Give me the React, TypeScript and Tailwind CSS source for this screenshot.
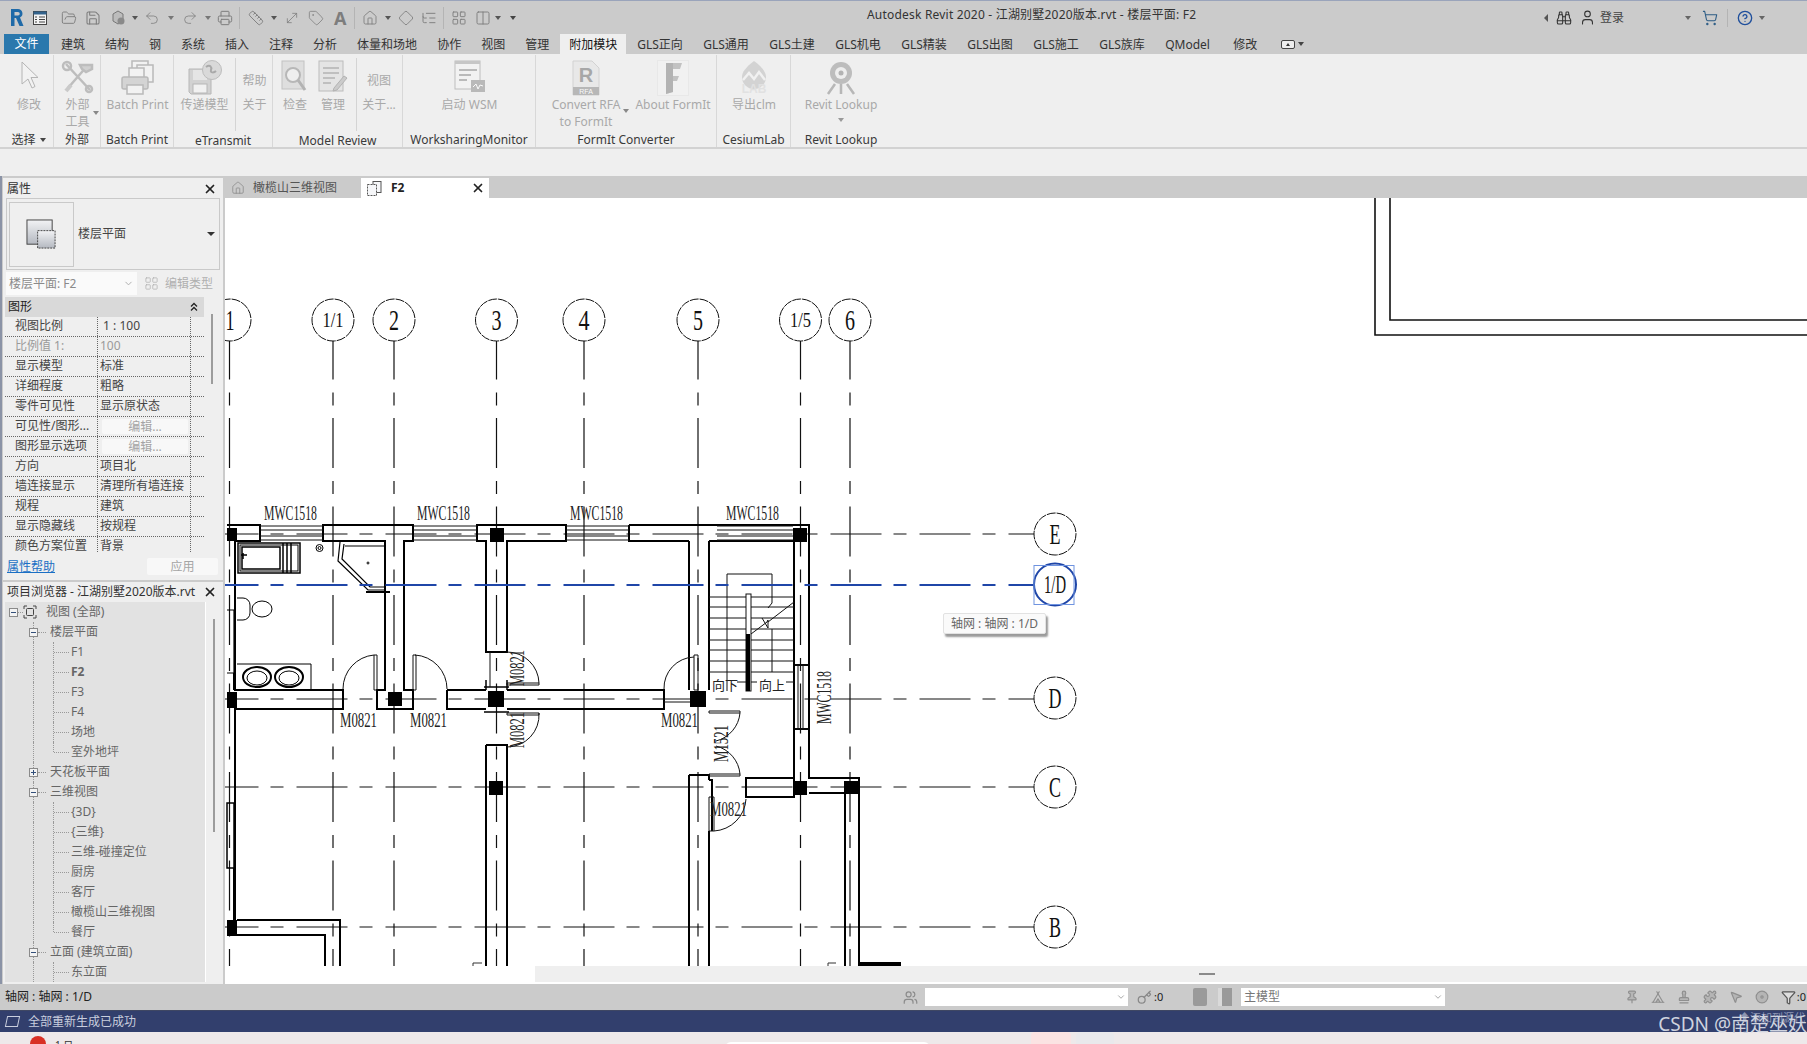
import {
  X, FolderOpen, Save, Undo2, Redo2, Printer, Ruler, MoveDiagonal, Tag, Home, Diamond, ListTree, LayoutGrid, Columns2,
  Binoculars, User, ShoppingCart, CircleHelp, ChevronDown, Pin, Tent, Stamp, Puzzle, MousePointer2, Disc, Filter, Users, Key,
} from "lucide-react";
import { ReactNode } from "react";

const Tri = ({ className = "" }: { className?: string }) => (
  <span className={`inline-block w-0 h-0 border-l-[3px] border-r-[3px] border-t-[4px] border-l-transparent border-r-transparent border-t-[#444] ${className}`} />
);

function Qat({ w, children }: { w: number; children?: ReactNode }) {
  return <div className="flex items-center justify-center shrink-0" style={{ width: w }}>{children}</div>;
}

function TitleBar() {
  const ic = "w-4 h-4 text-[#7d7d7d]";
  return (
    <div className="h-[34px] border-t border-[#9aa4bb] flex items-center shrink-0">
      <div className="w-[867px] flex items-center pl-[10px] shrink-0">
        <Qat w={14}>
          <svg width="14" height="19" viewBox="0 0 14 19"><path d="M1 1h7a4.5 4.5 0 0 1 2 8.5L13.500 18H9.500L6 10H4.500v8H1z" fill="#1f6aa8" /><path d="M4.500 4v3.500H8a1.700 1.700 0 0 0 0-3.500z" fill="#cbcbcb" /></svg>
        </Qat>
        <div className="w-[9px]" />
        <Qat w={14}>
          <svg width="14" height="14" viewBox="0 0 14 14"><rect x=".5" y=".5" width="13" height="13" fill="#f4f4f4" stroke="#444" /><rect x=".5" y=".5" width="13" height="3" fill="#33638c" /><path d="M6 6h6M6 8.500h6M6 11h6M2 6h2M2 8.500h2M2 11h2" stroke="#444" /></svg>
        </Qat>
        <div className="w-[14px]" />
        <FolderOpen className={ic} strokeWidth={1.4} />
        <div className="w-[8px]" />
        <Save className={ic} strokeWidth={1.6} />
        <div className="w-[9px]" />
        <Qat w={16}><svg width="16" height="16" viewBox="0 0 16 16"><path d="M3 4l5-3 5 3v7l-5 3-5-3z" fill="#bcbcbc" stroke="#777" /><circle cx="11" cy="11" r="3.500" fill="#8a8a8a" /></svg></Qat>
        <Qat w={18}><Tri className="border-t-[#555]" /></Qat>
        <Undo2 className={ic} strokeWidth={1.2} />
        <Qat w={22}><Tri className="border-t-[#777]" /></Qat>
        <Redo2 className={ic} strokeWidth={1.2} />
        <Qat w={19}><Tri className="border-t-[#777]" /></Qat>
        <Printer className={ic} strokeWidth={1.5} />
        <div className="w-[6px]" /><div className="w-px h-[22px] bg-[#b4b4b4]" /><div className="w-[8px]" />
        <Ruler className={ic} strokeWidth={1.4} />
        <Qat w={20}><Tri className="border-t-[#555]" /></Qat>
        <MoveDiagonal className={ic} strokeWidth={1.2} />
        <div className="w-[8px]" />
        <Tag className={ic} strokeWidth={1.2} />
        <div className="w-[10px]" />
        <span className="text-[18px] leading-none font-bold text-[#7d7d7d] w-[12px]">A</span>
        <div className="w-[8px]" /><div className="w-px h-[22px] bg-[#b4b4b4]" /><div className="w-[7px]" />
        <Home className={ic} strokeWidth={1.3} />
        <Qat w={20}><Tri className="border-t-[#555]" /></Qat>
        <Diamond className={ic} strokeWidth={1.3} />
        <div className="w-[7px]" />
        <ListTree className={ic} strokeWidth={1.4} />
        <div className="w-[6px]" /><div className="w-px h-[22px] bg-[#b4b4b4]" /><div className="w-[7px]" />
        <LayoutGrid className={ic} strokeWidth={1.4} />
        <div className="w-[8px]" />
        <Columns2 className={ic} strokeWidth={1.4} />
        <Qat w={14}><Tri className="border-t-[#555]" /></Qat>
        <Qat w={16}><Tri className="border-t-[#333]" /></Qat>
      </div>
      <div className="text-[12px] text-[#333] whitespace-nowrap tracking-[0.2px] pb-[6px]">Autodesk Revit 2020 - 江湖别墅2020版本.rvt - 楼层平面: F2</div>
      <div className="ml-auto flex items-center pr-[42px] gap-0">
        <span className="w-0 h-0 border-y-[4px] border-r-[4px] border-y-transparent border-r-[#555] mr-[8px]" />
        <Binoculars className="w-4 h-4 text-[#333]" strokeWidth={1.6} />
        <User className="w-[17px] h-[17px] text-[#333] ml-[7px]" strokeWidth={1.5} />
        <span className="text-[12px] text-[#444] ml-[4px] w-[85px]">登录</span>
        <Tri className="border-t-[#666]" />
        <ShoppingCart className="w-4 h-4 text-[#2c5c85] ml-[11px]" strokeWidth={1.6} />
        <div className="w-px h-[18px] bg-[#b4b4b4] ml-[9px] mr-[9px]" />
        <CircleHelp className="w-4 h-4 text-[#1f4f9c]" strokeWidth={2} />
        <Tri className="ml-[6px] border-t-[#666]" />
      </div>
    </div>
  );
}

const tabs = ["建筑", "结构", "钢", "系统", "插入", "注释", "分析", "体量和场地", "协作", "视图", "管理"];
const tabs2 = ["GLS正向", "GLS通用", "GLS土建", "GLS机电", "GLS精装", "GLS出图", "GLS施工", "GLS族库"];

function TabRow() {
  return (
    <div className="h-[20px] flex items-center text-[12px] text-[#333] shrink-0 pl-[4px]">
      <div className="w-[45px] h-full bg-[#2a78ad] text-white flex items-center justify-center">文件</div>
      <div className="flex gap-[20px] ml-[12px] pt-px">
        {tabs.map((t) => <span key={t}>{t}</span>)}
      </div>
      <div className="w-[66px] h-full bg-[#efefef] flex items-center justify-center ml-[11px] text-[#111] pt-px">附加模块</div>
      <div className="flex gap-[20px] ml-[11px] whitespace-nowrap pt-px">
        {tabs2.map((t) => <span key={t} className="w-[46px]">{t}</span>)}
        <span className="w-[48px]">QModel</span>
        <span>修改</span>
      </div>
      <div className="ml-[24px] flex items-center gap-[3px]">
        <span className="w-[14px] h-[9px] border border-[#444] rounded-[2px] bg-[#eee] flex items-center justify-center"><span className="w-0 h-0 border-x-[2px] border-b-[3px] border-x-transparent border-b-[#333]" /></span>
        <Tri />
      </div>
    </div>
  );
}

// gray ribbon icons, all disabled look
const RIc = {
  arrow: <svg width="22" height="34" viewBox="0 0 22 34"><path d="M4 2v22l6-5 4 9 3-1.500-4-9h7z" fill="#f4f4f4" stroke="#9c9c9c" /></svg>,
  tools: <svg width="34" height="34" viewBox="0 0 34 34" fill="none" stroke="#a9a9a9" strokeWidth="2.500"><path d="M5 4l24 26M27 5L7 28" /><path d="M19 5h12v4l-6 3-4-3z" fill="#c4c4c4" /><circle cx="6" cy="6" r="4" /><circle cx="28" cy="29" r="3" /><path d="M5 31l5-6" strokeWidth="4" stroke="#bbb" /></svg>,
  print: <svg width="34" height="36" viewBox="0 0 34 36" fill="#f4f4f4" stroke="#a3a3a3" strokeWidth="1.500"><rect x="11" y="1" width="16" height="17" /><rect x="16" y="5" width="16" height="17" /><rect x="8" y="8" width="15" height="12" /><rect x="1" y="17" width="26" height="12" rx="2" fill="#c9c9c9" /><rect x="6" y="25" width="16" height="9" /></svg>,
  floppy: <svg width="34" height="36" viewBox="0 0 34 36"><path d="M1 9h22v25H3l-2-2z" fill="#c6c6c6" stroke="#a0a0a0" /><rect x="5" y="24" width="14" height="9" fill="#f2f2f2" stroke="#a0a0a0" /><rect x="5" y="10" width="14" height="10" fill="#e2e2e2" /><circle cx="24" cy="10" r="9.500" fill="#d0d0d0" stroke="#a8a8a8" /><path d="M18 7c4-3 6 0 5 3s3 3 5 1" fill="none" stroke="#8c8c8c" strokeWidth="2" /></svg>,
  check: <svg width="28" height="34" viewBox="0 0 28 34"><rect x="1" y="1" width="22" height="28" fill="#d8d8d8" stroke="#b0b0b0" /><circle cx="12" cy="15" r="7" fill="#f0f0f0" stroke="#a0a0a0" strokeWidth="2" /><path d="M17 20l7 10" stroke="#9a9a9a" strokeWidth="3" /></svg>,
  manage: <svg width="30" height="34" viewBox="0 0 30 34"><rect x="1" y="1" width="24" height="30" fill="#e0e0e0" stroke="#a8a8a8" /><path d="M5 8h16M5 13h16M5 18h12M5 23h8" stroke="#9a9a9a" strokeWidth="1.500" /><path d="M16 28l10-12 3 2-10 12-4 1z" fill="#bdbdbd" stroke="#999" /></svg>,
  wsm: <svg width="32" height="34" viewBox="0 0 32 34"><rect x="1" y="1" width="25" height="28" fill="#f4f4f4" stroke="#aaa" /><rect x="1" y="1" width="25" height="3" fill="#b5b5b5" /><path d="M5 10h18M5 15h12M5 20h8" stroke="#a5a5a5" strokeWidth="2" /><rect x="17" y="20" width="14" height="12" fill="#a3a3a3" /><path d="M19 27l3-3 2 5 2-4 3 1" stroke="#fff" fill="none" /></svg>,
  rfa: <svg width="28" height="36" viewBox="0 0 28 36"><path d="M1 1h19l7 7v27H1z" fill="#e6e6e6" stroke="#c6c6c6" /><rect x="1" y="27" width="26" height="8" fill="#a0a0a0" /><text x="14" y="34" fontSize="7" textAnchor="middle" fill="#fff" fontFamily="Liberation Sans">RFA</text><text x="14" y="22" fontSize="20" fontWeight="700" textAnchor="middle" fill="#8a8a8a" fontFamily="Liberation Sans">R</text></svg>,
  formit: <svg width="32" height="36" viewBox="0 0 32 36"><rect x=".5" y=".5" width="31" height="35" fill="#f3f3f3" stroke="#e6e6e6" /><path d="M9 3h16l-2 6H16v7h6l-2 5h-4v11l-7 2z" fill="#b0b0b0" /><path d="M9 3v31l7-2V3z" fill="#8e8e8e" opacity=".6" /></svg>,
  lab: <svg width="30" height="36" viewBox="0 0 30 36"><path d="M15 1c8 6 12 11 12 16a12 12 0 0 1-24 0C3 12 7 7 15 1z" fill="#c8c8c8" /><path d="M4 20l6-7 5 6 5-7 6 8" fill="none" stroke="#f2f2f2" strokeWidth="2.500" /><text x="15" y="33" fontSize="12" fontWeight="700" textAnchor="middle" fill="#dcdcdc" fontFamily="Liberation Sans">LAB</text></svg>,
  lookup: <svg width="30" height="36" viewBox="0 0 30 36" fill="none"><path d="M9 24L2 34M21 24l7 10M15 24v10" stroke="#a0a0a0" strokeWidth="2.500" /><circle cx="15" cy="13" r="11" fill="#a8a8a8" /><circle cx="15" cy="13" r="6" fill="#eee" /><circle cx="15" cy="13" r="2.500" fill="#9a9a9a" /></svg>,
};

function RBtn({ w, icon, label, label2 }: { w: number; icon?: ReactNode; label: string; label2?: string }) {
  return (
    <div className="flex flex-col items-center shrink-0" style={{ width: w }}>
      <div className="h-[41px] pt-[5px] flex items-start justify-center opacity-70">{icon}</div>
      <div className="text-[12px] leading-[17px] text-[#a9a9a9] text-center whitespace-nowrap">{label}</div>
      {label2 && <div className="text-[12px] leading-[17px] text-[#a9a9a9] text-center whitespace-nowrap">{label2}</div>}
    </div>
  );
}

function MiniBtn({ w, a, b }: { w: number; a: string; b: string }) {
  return (
    <div className="flex flex-col items-center text-[12px] text-[#a9a9a9] pt-[17px] shrink-0" style={{ width: w }}>
      <span className="leading-[17px]">{a}</span>
      <span className="leading-[17px] mt-[7px]">{b}</span>
    </div>
  );
}

function Panel({ w, title, children, last, tri }: { w: number; title: string; children: ReactNode; last?: boolean; tri?: boolean }) {
  return (
    <div className={`h-full flex flex-col shrink-0 ${last ? "" : "border-r border-[#d8d8d8]"}`} style={{ width: w }}>
      <div className="h-[77px] flex">{children}</div>
      <div className="h-[17px] pt-[2px] flex items-center justify-center gap-[4px] text-[12px] text-[#3a3a3a] whitespace-nowrap">
        {title}{tri && <Tri />}
      </div>
    </div>
  );
}

const VSep = () => <div className="w-px h-[73px] mt-[3px] bg-[#d4d4d4] shrink-0" />;

function Ribbon() {
  return (
    <div className="h-[95px] bg-[#efefef] border-b-2 border-[#d2d2d2] flex pl-[4px] shrink-0 pt-px">
      <Panel w={50} title="选择" tri><RBtn w={50} icon={RIc.arrow} label="修改" /></Panel>
      <Panel w={47} title="外部">
        <div className="relative">
          <RBtn w={47} icon={RIc.tools} label="外部" label2="工具" />
          <Tri className="absolute right-[2px] top-[56px] border-t-[#888]" />
        </div>
      </Panel>
      <Panel w={73} title="Batch Print"><RBtn w={73} icon={RIc.print} label="Batch Print" /></Panel>
      <Panel w={99} title="eTransmit">
        <RBtn w={61} icon={RIc.floppy} label="传递模型" /><VSep /><MiniBtn w={37} a="帮助" b="关于" />
      </Panel>
      <Panel w={130} title="Model Review">
        <div className="w-[3px]" />
        <RBtn w={38} icon={RIc.check} label="检查" /><RBtn w={38} icon={RIc.manage} label="管理" />
        <div className="w-[4px]" /><VSep /><MiniBtn w={44} a="视图" b="关于..." />
      </Panel>
      <Panel w={133} title="WorksharingMonitor"><RBtn w={133} icon={RIc.wsm} label="启动 WSM" /></Panel>
      <Panel w={181} title="FormIt Converter">
        <div className="relative">
          <RBtn w={100} icon={RIc.rfa} label="Convert RFA" label2="to FormIt" />
          <Tri className="absolute right-[7px] top-[54px] border-t-[#888]" />
        </div>
        <RBtn w={74} icon={RIc.formit} label="About FormIt" />
      </Panel>
      <Panel w={74} title="CesiumLab"><RBtn w={74} icon={RIc.lab} label="导出clm" /></Panel>
      <Panel w={100} title="Revit Lookup" last>
        <div className="flex flex-col items-center w-[100px]">
          <RBtn w={100} icon={RIc.lookup} label="Revit Lookup" />
          <Tri className="mt-[5px] border-t-[#999]" />
        </div>
      </Panel>
    </div>
  );
}

const props: [string, string, number?][] = [
  ["视图比例", "\u00a01 : 100"],
  ["比例值 1:", "100", 1],
  ["显示模型", "标准"],
  ["详细程度", "粗略"],
  ["零件可见性", "显示原状态"],
  ["可见性/图形...", "编辑...", 2],
  ["图形显示选项", "编辑...", 2],
  ["方向", "项目北"],
  ["墙连接显示", "清理所有墙连接"],
  ["规程", "建筑"],
  ["显示隐藏线", "按规程"],
  ["颜色方案位置", "背景"],
];

function PropertiesPanel() {
  return (
    <div className="h-[402px] bg-[#efefef] flex flex-col shrink-0">
      <div className="h-[20px] flex items-center justify-between pl-[4px] pr-[6px] pt-px text-[12px] text-[#333] shrink-0">
        <span>属性</span>
        <X className="w-[14px] h-[14px] text-[#222]" strokeWidth={3} />
      </div>
      <div className="h-[72px] mx-[3px] border border-[#c9c9c9] flex items-center pl-[2px] shrink-0">
        <div className="w-[65px] h-[65px] border border-[#c9c9c9] flex items-center justify-center">
          <svg width="31" height="31" viewBox="0 0 32 32">
            <defs><linearGradient id="pg" x1="0" y1="0" x2="0" y2="1"><stop offset="0" stopColor="#f2f3f5" /><stop offset="1" stopColor="#b4b8c0" /></linearGradient></defs>
            <rect x="1" y="1" width="26" height="25" fill="url(#pg)" stroke="#444" />
            <rect x="12" y="12" width="18" height="18" fill="url(#pg)" stroke="#444" strokeDasharray="2 1" />
          </svg>
        </div>
        <span className="text-[12px] text-[#444] ml-[4px]">楼层平面</span>
        <span className="ml-auto mr-[4px] w-0 h-0 border-x-[4px] border-t-[4px] border-x-transparent border-t-[#333]" />
      </div>
      <div className="h-[23px] mt-[2px] mx-[3px] flex items-center shrink-0">
        <div className="w-[131px] h-full bg-[#fafafa] flex items-center justify-between px-[3px] text-[12px] text-[#8a8a8a]">
          <span>楼层平面: F2</span><ChevronDown className="w-[11px] h-[11px] text-[#aaa]" />
        </div>
        <div className="ml-[7px] flex items-center text-[12px] text-[#b0b0b0] gap-[6px]">
          <LayoutGrid className="w-[15px] h-[15px]" strokeWidth={1.2} /><span>编辑类型</span>
        </div>
      </div>
      <div className="flex flex-1 min-h-0 mt-[2px]">
        <div className="ml-[2px] w-[199px] overflow-hidden">
          <div className="h-[20px] bg-[#d9d9d9] flex items-center justify-between pl-[3px] pr-[6px] text-[12px] text-[#222]">
            <span>图形</span>
            <svg width="8" height="10" viewBox="0 0 8 10" fill="none" stroke="#222" strokeWidth="1.300"><path d="M1 4.500l3-3 3 3M1 8.500l3-3 3 3" /></svg>
          </div>
          <div className="h-[236px] overflow-hidden">
            {props.map(([k, v, kind]) => (
              <div key={k} className="h-[20px] grid grid-cols-[93px_93px_13px] border-b border-dotted border-[#666] text-[12px] leading-[15px]">
                <span className={`pl-[10px] pt-px border-r border-dotted border-[#666] whitespace-nowrap ${kind === 1 ? "text-[#9a9a9a]" : "text-[#444]"}`}>{k}</span>
                <span className={`pl-[2px] pt-px border-r border-dotted border-[#666] whitespace-nowrap ${kind === 1 ? "text-[#9a9a9a]" : "text-[#444]"}`}>
                  {kind === 2 ? <span className="block mx-[2px] mt-px h-[15px] bg-[#f8f8f8] rounded-[2px] text-center text-[#a5a5a5]">{v}</span> : v}
                </span>
                <span />
              </div>
            ))}
          </div>
        </div>
        <div className="w-[15px] pl-[7px]">
          <div className="w-[2px] h-[70px] mt-[17px] bg-[#9c9c9c]" />
        </div>
      </div>
      <div className="h-[27px] flex items-center justify-between pl-[4px] pr-[5px] text-[12px] shrink-0">
        <span className="text-[#1a6fc4] underline">属性帮助</span>
        <span className="w-[71px] h-[17px] bg-[#f8f8f8] rounded-[2px] flex items-center justify-center text-[#a5a5a5]">应用</span>
      </div>
    </div>
  );
}

type Node = { t: string; d: number; ex?: "-" | "+"; bold?: boolean; root?: boolean; l?: number };
const tree: Node[] = [
  { t: "视图 (全部)", d: 0, ex: "-", root: true },
  { t: "楼层平面", d: 1, ex: "-" },
  { t: "F1", d: 2, l: 1 },
  { t: "F2", d: 2, bold: true, l: 1 },
  { t: "F3", d: 2, l: 1 },
  { t: "F4", d: 2, l: 1 },
  { t: "场地", d: 2, l: 1 },
  { t: "室外地坪", d: 2, l: 2 },
  { t: "天花板平面", d: 1, ex: "+" },
  { t: "三维视图", d: 1, ex: "-" },
  { t: "{3D}", d: 2, l: 1 },
  { t: "{三维}", d: 2, l: 1 },
  { t: "三维-碰撞定位", d: 2, l: 1 },
  { t: "厨房", d: 2, l: 1 },
  { t: "客厅", d: 2, l: 1 },
  { t: "橄榄山三维视图", d: 2, l: 1 },
  { t: "餐厅", d: 2, l: 2 },
  { t: "立面 (建筑立面)", d: 1, ex: "-" },
  { t: "东立面", d: 2, l: 1 },
];

function Expander({ sign }: { sign: "-" | "+" }) {
  return (
    <span className="w-[9px] h-[9px] border border-[#8a8a8a] bg-[#f3f3f3] flex items-center justify-center relative shrink-0">
      <span className="w-[5px] h-px bg-[#33507a]" />
      {sign === "+" && <span className="absolute w-px h-[5px] bg-[#33507a]" />}
    </span>
  );
}

function TreeRow({ n }: { n: Node }) {
  return (
    <div className="h-[20px] relative text-[12px] text-[#666] flex items-center">
      {n.d > 0 && <span className="absolute left-[28px] top-0 bottom-0 border-l border-dotted border-[#999]" />}
      {n.d === 2 && <span className={`absolute left-[48px] top-0 border-l border-dotted border-[#999] ${n.l === 2 ? "h-[10px]" : "bottom-0"}`} />}
      {n.d === 2 && <span className="absolute left-[49px] w-[15px] top-[10px] border-t border-dotted border-[#999]" />}
      {n.d === 0 && (
        <div className="flex items-center pl-[4px]">
          <Expander sign="-" />
          <span className="w-[5px] border-t border-dotted border-[#999]" />
          <svg width="14" height="14" viewBox="0 0 14 14" fill="none" stroke="#444"><path d="M1 4V1h3M10 1h3v3M13 10v3h-3M4 13H1v-3" /><rect x="3.500" y="3.500" width="7" height="7" rx="1" /></svg>
          <span className="ml-[9px]">{n.t}</span>
        </div>
      )}
      {n.d === 1 && (
        <div className="flex items-center pl-[24px] relative bg-transparent">
          <Expander sign={n.ex!} />
          <span className="w-[8px] border-t border-dotted border-[#999]" />
          <span className="ml-[4px]">{n.t}</span>
        </div>
      )}
      {n.d === 2 && <span className={`pl-[66px] ${n.bold ? "font-bold" : ""}`}>{n.t}</span>}
    </div>
  );
}

function BrowserPanel() {
  return (
    <div className="h-[406px] bg-[#efefef] flex flex-col overflow-hidden">
      <div className="h-[20px] flex items-center justify-between pl-[4px] pr-[6px] text-[12px] text-[#333] shrink-0">
        <span>项目浏览器 - 江湖别墅2020版本.rvt</span>
        <X className="w-[14px] h-[14px] text-[#222]" strokeWidth={3} />
      </div>
      <div className="flex h-[380px] pl-[2px]">
        <div className="w-[200px] bg-[#e2e2e2] overflow-hidden border-r border-white box-content">
          {tree.map((n, i) => <TreeRow key={i} n={n} />)}
        </div>
        <div className="pl-[7px]"><div className="w-[2px] h-[213px] mt-[17px] bg-[#9c9c9c]" /></div>
      </div>
    </div>
  );
}

const vx = [229.500, 333, 394, 496.500, 584, 698, 800.500, 850];
const hy = [534, 699, 787, 927];

function Label({ x, y, w, t, size = 20, rot }: { x: number; y: number; w: number; t: string; size?: number; rot?: boolean }) {
  return (
    <text x={x} y={y} textLength={w} lengthAdjust="spacingAndGlyphs" fontSize={size} fill="#222" stroke="none"
      transform={rot ? `rotate(-90 ${x} ${y})` : undefined}>{t}</text>
  );
}

function WinH({ x1, x2, y1, y2 }: { x1: number; x2: number; y1: number; y2: number }) {
  return <path d={`M${x1} ${y1}H${x2}M${x1} ${y1 + 4}H${x2}M${x1} ${y2 - 4}H${x2}M${x1} ${y2}H${x2}`} stroke="#111" strokeWidth="1" fill="none" />;
}

function Column({ x, y, w = 14, h = 14 }: { x: number; y: number; w?: number; h?: number }) {
  return <rect x={x} y={y} width={w} height={h} fill="#000" stroke="none" />;
}

function Bubble({ cx, cy, t, w, size, color = "#111" }: { cx: number; cy: number; t: string; w: number; size: number; color?: string }) {
  return (
    <g>
      <circle cx={cx} cy={cy} r="21" fill="#fff" stroke={color} strokeWidth={color === "#111" ? 1 : 2} strokeDasharray={color === "#111" ? "9 1" : undefined} />
      <text x={cx - w / 2} y={cy + size * 0.33} textLength={w} lengthAdjust="spacingAndGlyphs" fontSize={size} fill="#111">{t}</text>
    </g>
  );
}

function Drawing() {
  return (
    <svg width="1582" height="768" viewBox="225 198 1582 768" className="block font-['Liberation_Serif',serif]">
      {/* far wall top right */}
      <path d="M1375 198V335H1807M1390 198V320H1807" fill="none" stroke="#111" strokeWidth="1.600" />
      {/* grid lines */}
      <g stroke="#111" strokeWidth="1.200" fill="none">
        {vx.map((x) => <line key={x} x1={x} x2={x} y1={341} y2={966} strokeDasharray="50 13 13 12.500" strokeDashoffset={11.500} />)}
        {hy.map((y) => <line key={y} x1={225} x2={1034} y1={y} y2={y} strokeDasharray="51 12 13 13" strokeDashoffset={17.500} />)}
      </g>
      <Bubble cx={230} cy={320} t="1" w={9} size={29} />
      <Bubble cx={333} cy={320} t="1/1" w={21} size={22} />
      <Bubble cx={394} cy={320} t="2" w={10} size={29} />
      <Bubble cx={496.500} cy={320} t="3" w={10} size={29} />
      <Bubble cx={584} cy={320} t="4" w={11} size={29} />
      <Bubble cx={698} cy={320} t="5" w={10} size={29} />
      <Bubble cx={800.500} cy={320} t="1/5" w={21} size={22} />
      <Bubble cx={850} cy={320} t="6" w={10} size={29} />
      <Bubble cx={1055} cy={534} t="E" w={11} size={30} />
      <Bubble cx={1055} cy={698} t="D" w={13} size={30} />
      <Bubble cx={1055} cy={787} t="C" w={12} size={30} />
      <Bubble cx={1055} cy={927} t="B" w={12} size={30} />

      {/* walls */}
      <g fill="none" stroke="#000" strokeWidth="2">
        <path d="M227 525H260V541H235V690H343V709H235V920" />
        <path d="M323 525H413V541H404V690H413V709H377V690H385V541H323Z" />
        <path d="M477 525H566V541H507V652H486V541H477Z" />
        <path d="M447 690H486M507 690H664V709H507M486 709H447V690" />
        <path d="M486 745H507V966M486 745V966" />
        <path d="M629 525H809V665H794V541H717M709 541V690M689 541V690M629 525V541H689M709 541H717" />
        <path d="M794 729V665M809 729V665M794 729H809V778H859V793H809M794 729V797H746V778H794" />
        <path d="M845 794V966M859 794V966" />
        <path d="M689 775H709V780M689 775V966M709 780H712V831M709 831V966" />
        <path d="M237 920H340V966M237 935H325V966" />
        <path d="M227 803H234V868H227Z" strokeWidth="1.500" />
        <path d="M227 610H234V673H227" strokeWidth="1.200" />
        <path d="M234 673V690M234 868V920" />
        <path d="M486 690V680M507 690V680M484 687H509M484 712H509" strokeWidth="1.500" />
      </g>
      <WinH x1={260} x2={323} y1={526} y2={540} />
      <WinH x1={413} x2={477} y1={526} y2={540} />
      <WinH x1={566} x2={629} y1={526} y2={540} />
      <WinH x1={717} x2={793} y1={526} y2={540} />
      <path d="M795 665H808M795 729H808M798 665V729M803 665V729" stroke="#111" fill="none" />
      <Column x={227} y={528} w={10} h={13} />
      <Column x={490} y={528} />
      <Column x={793} y={528} />
      <Column x={227} y={692} w={10} h={16} />
      <Column x={388} y={692} />
      <Column x={488} y={691} w={16} h={16} />
      <Column x={690} y={691} w={16} h={16} />
      <Column x={489} y={781} />
      <Column x={793} y={781} />
      <Column x={844} y={781} w={15} h={13} />
      <Column x={227} y={920} w={10} h={16} />
      <rect x={859} y={962} width={42} height={4} fill="#000" />

      {/* doors */}
      <g fill="none" stroke="#111" strokeWidth="1">
        <path d="M374 655A34 34 0 0 0 343 689M374 655h3v35h-3zM415 655A34 34 0 0 1 447 689M413 655h3v35h-3z" />
        <path d="M507 652A32 32 0 0 1 539 683M507 683h32v2h-32zM490 652V687M539 713A32 32 0 0 1 507 747M507 713h32v2h-32z" />
        <path d="M694 657A31 31 0 0 0 664 689M694 655h4v35h-4zM664 702H690" />
        <path d="M740 713A32 32 0 0 1 716 741M709 711h31v2h-31zM740 774A32 32 0 0 0 716 746M709 774h31v2h-31z" />
        <path d="M709 797h5v34h-5zM714 831A34 34 0 0 0 746 799" />
      </g>

      {/* bathroom */}
      <g fill="none" stroke="#000" strokeWidth="1">
        <rect x="238" y="543" width="62" height="30" strokeWidth="1.500" />
        <rect x="240" y="545" width="58" height="26" />
        <path d="M242 547H280V569H242ZM283 543V573M287 543V573M291 543V573" strokeWidth="1.500" />
        <path d="M241 555h6M243 553v6" strokeWidth="1.500" />
        <circle cx="319.500" cy="548" r="3.500" /><circle cx="319.500" cy="548" r="1.500" />
        <path d="M340 542L338 561L368 590H385M344 544L342 559L370 587H385M345 546H384M385 541V590" strokeWidth="1.200" />
        <circle cx="368" cy="563" r="1" />
        <path d="M366 592H390" strokeWidth="2" />
        <path d="M237 598h6a7 7 0 0 1 7 7v8a7 7 0 0 1-7 7h-6" />
        <ellipse cx="262" cy="609" rx="10" ry="8" />
        <path d="M237 664H311V689" />
        <ellipse cx="257" cy="677" rx="14" ry="10" strokeWidth="2" /><ellipse cx="257" cy="678" rx="10" ry="7" />
        <ellipse cx="289" cy="677" rx="14" ry="10" strokeWidth="2" /><ellipse cx="289" cy="678" rx="10" ry="7" />
      </g>

      {/* stairs */}
      <g fill="none" stroke="#111" strokeWidth="1">
        {[597, 607, 618, 629, 640, 650, 661, 672].map((y) => <line key={y} x1={709} x2={794} y1={y} y2={y} />)}
        <path d="M727 691V574H772V603M772 629V672M751 634L767 622L768 620V628L762 618M772 603L768 608M794 602L768 622" />
        <path d="M737 682H746M751 682H757M786 682H794" />
      </g>
      <rect x="746" y="594" width="5" height="97" fill="#fff" stroke="#111" />
      <rect x="746" y="634" width="4" height="57" fill="#000" />
      <text x="712" y="690" fontSize="13" fontFamily="'Noto Sans CJK SC',sans-serif" fill="#222">向下</text>
      <text x="759" y="690" fontSize="13" fontFamily="'Noto Sans CJK SC',sans-serif" fill="#222">向上</text>
      <path d="M473 966v-3h9M828 966v-3h8" fill="none" stroke="#333" />

      {/* tags */}
      <Label x={264} y={520} w={53} t="MWC1518" />
      <Label x={417} y={520} w={53} t="MWC1518" />
      <Label x={570} y={520} w={53} t="MWC1518" />
      <Label x={726} y={520} w={53} t="MWC1518" />
      <Label x={340} y={727} w={37} t="M0821" />
      <Label x={410} y={727} w={37} t="M0821" />
      <Label x={661} y={727} w={37} t="M0821" />
      <Label x={710} y={816} w={37} t="M0821" />
      <Label x={524} y={686} w={36} t="M0821" rot />
      <Label x={524} y={748} w={36} t="M0821" rot />
      <Label x={728} y={762} w={37} t="M1521" rot />
      <Label x={831} y={724} w={53} t="MWC1518" rot />

      {/* selected grid */}
      <line x1={225} x2={1034} y1={585} y2={585} stroke="#1f46a8" strokeWidth="2" strokeDasharray="51 12 13 13" strokeDashoffset={17.500} />
      <Bubble cx={1055} cy={584.500} t="1/D" w={22} size={25} color="#1f46a8" />
      <rect x="1034" y="565.500" width="40" height="39" fill="none" stroke="#6f93e0" />
    </svg>
  );
}

function StatusBar() {
  const ic = "w-[14px] h-[14px] text-[#8f8f8f] fill-[#b5b5b5]";
  return (
    <div className="h-[26px] bg-[#cbcbcb] flex items-center text-[12px] text-[#222] shrink-0">
      <span className="pl-[5px] w-[903px]">轴网 : 轴网 : 1/D</span>
      <Users className="w-[15px] h-[15px] text-[#8c8c8c]" />
      <div className="ml-[7px] w-[203px] h-[18px] bg-white flex items-center justify-end pr-[2px]"><ChevronDown className="w-[10px] h-[10px] text-[#999]" /></div>
      <Key className="ml-[9px] w-[15px] h-[15px] text-[#888]" />
      <span className="ml-[2px] text-[11px] w-[39px]">:0</span>
      <div className="w-[14px] h-[18px] bg-[#9a9a9a] rounded-[2px]" />
      <div className="ml-[11px] w-[14px] h-[18px] bg-[#9a9a9a] border-l-[4px] border-[#dadada]" />
      <div className="ml-[9px] w-[204px] h-[18px] bg-white flex items-center justify-between pl-[3px] pr-[2px] text-[#777]">
        <span>主模型</span><ChevronDown className="w-[10px] h-[10px] text-[#999]" />
      </div>
      <div className="ml-auto flex items-center gap-[12px] pr-[1px]">
        <Pin className={ic} /><Tent className={ic} /><Stamp className={ic} /><Puzzle className={ic} /><MousePointer2 className={ic} /><Disc className={ic} />
        <span className="flex items-center gap-px"><Filter className="w-[15px] h-[15px] text-[#555] fill-[#ddd]" /><span className="text-[11px]">:0</span></span>
      </div>
    </div>
  );
}

export default function App() {
  return (
    <div className="w-[1807px] h-[1044px] overflow-hidden flex flex-col bg-[#cbcbcb] font-['Noto_Sans','Noto_Sans_CJK_SC',sans-serif]">
      <TitleBar />
      <TabRow />
      <Ribbon />
      <div className="h-[27px] bg-[#efefef] shrink-0" />
      <div className="h-[808px] flex pt-[2px] pl-[3px] gap-[2px] shrink-0 border-l-[2px] border-[#8b93a6] box-border">
        <div className="ml-[-2px] w-[220px] flex flex-col gap-[2px] shrink-0">
          <PropertiesPanel />
          <BrowserPanel />
        </div>
        <div className="flex-1 flex flex-col min-w-0">
          <div className="h-[20px] flex items-center text-[12px] shrink-0">
            <div className="w-[136px] flex items-center pl-[6px] gap-[8px] text-[#555]">
              <Home className="w-[14px] h-[14px] text-[#888]" strokeWidth={1.3} />
              <span>橄榄山三维视图</span>
            </div>
            <div className="w-[128px] h-full bg-white flex items-center pl-[6px] pr-[4px] gap-[9px]">
              <svg width="15" height="15" viewBox="0 0 15 15" fill="#f6f7f9" stroke="#555"><rect x="6" y=".5" width="8" height="11" /><rect x=".5" y="3.500" width="9" height="11" strokeDasharray="2 1" /></svg>
              <span className="font-bold text-[#222]">F2</span>
              <X className="ml-auto w-[14px] h-[14px] text-[#222]" strokeWidth={3} />
            </div>
          </div>
          <div className="relative h-[768px] bg-white overflow-hidden shrink-0">
            <Drawing />
            <div className="absolute left-[718px] top-[415px] w-[103px] h-[21px] bg-[#fafafa] border border-[#e2e2e2] rounded-[2px] shadow-[2px_3px_2px_#9a9a9a] flex items-center justify-center text-[12px] text-[#666] whitespace-nowrap">
              轴网 : 轴网 : 1/D
            </div>
          </div>
          <div className="h-[18px] bg-white flex pl-[310px] pb-[2px] shrink-0">
            <div className="flex-1 bg-[#efefef] flex items-center pl-[664px]">
              <span className="w-[16px] h-[2px] bg-[#8a8a8a]" />
            </div>
          </div>
        </div>
      </div>
      <StatusBar />
      <div className="h-[22px] bg-[#323f6d] border-t border-[#3f4763] flex items-center text-[12px] text-[#c9cede] relative shrink-0">
        <span className="ml-[6px] w-[13px] h-[11px] border border-[#c9cede] -skew-x-12" />
        <span className="ml-[9px]">全部重新生成已成功</span>
        <span className="absolute right-[2px] top-[1px] text-[11px] leading-[12px] text-[#8d95b2] whitespace-nowrap">⬆添加到源代</span>
        <span className="ml-auto text-[19px] leading-none text-[#cfd3df] whitespace-nowrap translate-y-[3px] relative z-10">CSDN @南楚巫妖</span>
      </div>
      <div className="h-[12px] bg-[#eee9ea] flex items-start shrink-0 overflow-hidden">
        <span className="ml-[30px] mt-[4px] w-[16px] h-[16px] rounded-full bg-[#d93025]" />
        <span className="ml-[9px] mt-[8px] text-[10px] leading-[10px] text-[#333] w-[20px]">1 日</span>
        <span className="ml-[650px] mt-[10px] w-[205px] h-[10px] bg-white rounded-t-[6px]" />
        <span className="ml-[101px] w-[40px] h-[12px] bg-[#fbe3e3] rounded-t-[4px]" />
        <span className="ml-[5px] w-[38px] h-[12px] bg-[#e9e9ec] rounded-t-[4px]" />
      </div>
    </div>
  );
}
